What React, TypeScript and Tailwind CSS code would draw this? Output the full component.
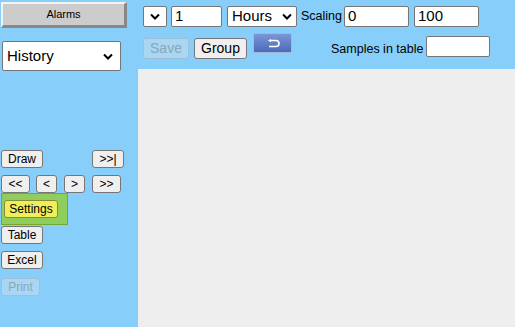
import React from "react";

const btn =
  "bg-[#efefef] border border-[#767676] rounded-[3px] text-[12px] leading-none text-black flex items-center justify-center";

function Chevron() {
  return (
    <svg width="10" height="7" viewBox="0 0 10 7">
      <path d="M1 1.5 L5 5.5 L9 1.5" fill="none" stroke="#000" strokeWidth="2" />
    </svg>
  );
}

export default function App() {
  return (
    <div className="flex w-[515px] h-[327px] bg-[#87cefa] font-['Liberation_Sans',Arial,sans-serif] overflow-hidden">
      <aside className="w-[138px] shrink-0 flex flex-col">
        <div className="mt-[2px] ml-[1px] w-[126px] h-[26px] bg-[#cccccc] border-t-2 border-l-2 border-t-[#f4f4f4] border-l-[#f4f4f4] border-b-[3px] border-r-[3px] border-b-[#888] border-r-[#888] flex items-center justify-center text-[11px] text-black">
          Alarms
        </div>
        <div className="mt-[13px] ml-[2px] w-[119px] h-[30px] bg-white border border-[#767676] rounded-[2px] flex items-center justify-between pl-[4px] pr-[7px] text-[15px] text-black">
          <span>History</span>
          <Chevron />
        </div>
        <div className="mt-[79px] ml-[1px] flex flex-col">
          <div className="flex justify-between w-[123px]">
            <div className={`${btn} w-[42px] h-[18px]`}>Draw</div>
            <div className={`${btn} w-[32px] h-[18px] text-[11px]`}>&gt;&gt;|</div>
          </div>
          <div className="flex mt-[7px] h-[18px]">
            <div className={`${btn} w-[29px] h-[18px] text-[10px]`}>&lt;&lt;</div>
            <div className={`${btn} w-[21px] h-[18px] text-[10px] ml-[6px]`}>&lt;</div>
            <div className={`${btn} w-[21px] h-[18px] text-[10px] ml-[7px]`}>&gt;</div>
            <div className={`${btn} w-[29px] h-[18px] text-[10px] ml-[7px]`}>&gt;&gt;</div>
          </div>
          <div className="w-[67px] h-[32px] bg-[#8fce5c] border border-[#76a82a] flex items-center pl-[2px]">
            <div className="w-[54px] h-[18px] bg-[#f0ef5a] border border-[#8a8a3a] rounded-[3px] text-[12px] flex items-center justify-center text-black">
              Settings
            </div>
          </div>
          <div className={`${btn} w-[42px] h-[18px] mt-[1px]`}>Table</div>
          <div className={`${btn} w-[42px] h-[18px] mt-[7px]`}>Excel</div>
          <div className="w-[39px] h-[18px] mt-[9px] border border-[#9fbfd6] bg-[#a9d6f2] rounded-[3px] text-[12px] text-[#8aa6b8] flex items-center justify-center">
            Print
          </div>
        </div>
      </aside>
      <main className="flex-1 flex flex-col">
        <div className="h-[69px] shrink-0 flex flex-col">
          <div className="flex items-center mt-[6px] ml-[5px] h-[21px]">
            <div className="w-[24px] h-[21px] bg-white border border-[#767676] rounded-[2px] flex items-center justify-center">
              <Chevron />
            </div>
            <div className="ml-[4px] w-[51px] h-[21px] bg-white border border-[#767676] rounded-[2px] flex items-center pl-[3px] text-[15px] text-black">
              1
            </div>
            <div className="ml-[5px] w-[70px] h-[21px] bg-white border border-[#767676] rounded-[2px] flex items-center justify-between pl-[4px] pr-[4px] text-[15px] text-black">
              <span>Hours</span>
              <Chevron />
            </div>
            <span className="ml-[4px] text-[12.5px] text-black">Scaling</span>
            <div className="ml-[2px] w-[65px] h-[21px] bg-white border border-[#767676] rounded-[2px] flex items-center pl-[3px] text-[15px] text-black">
              0
            </div>
            <div className="ml-[5px] w-[65px] h-[21px] bg-white border border-[#767676] rounded-[2px] flex items-center pl-[3px] text-[15px] text-black">
              100
            </div>
          </div>
          <div className="flex items-start mt-[6px] ml-[5px]">
            <div className="mt-[5px] w-[46px] h-[21px] bg-[#a9d6f2] border border-[#9fbfd6] rounded-[3px] text-[14px] text-[#8aa6b8] flex items-center justify-center">
              Save
            </div>
            <div className="mt-[5px] ml-[5px] w-[53px] h-[21px] bg-[#efefef] border border-[#767676] rounded-[3px] text-[14px] text-black flex items-center justify-center">
              Group
            </div>
            <div className="ml-[6px] w-[39px] h-[20px] border border-[#a4b8d8] bg-gradient-to-b from-[#7d95d6] to-[#4b6ab8] flex items-center justify-center">
              <svg width="14" height="9" viewBox="0 0 14 9">
                <path d="M4 1.5 H10 A3 3 0 0 1 10 7.5 H3" fill="none" stroke="#fff" strokeWidth="1.6" />
                <path d="M5 0 L2 1.5 L5 3.2 Z" fill="#fff" />
              </svg>
            </div>
            <span className="mt-[7px] ml-[39px] text-[12.5px] text-black">Samples in table</span>
            <div className="mt-[3px] ml-[3px] w-[64px] h-[21px] bg-white border border-[#767676] rounded-[2px]" />
          </div>
        </div>
        <div className="flex-1 bg-[#eeeeee]" />
      </main>
    </div>
  );
}
